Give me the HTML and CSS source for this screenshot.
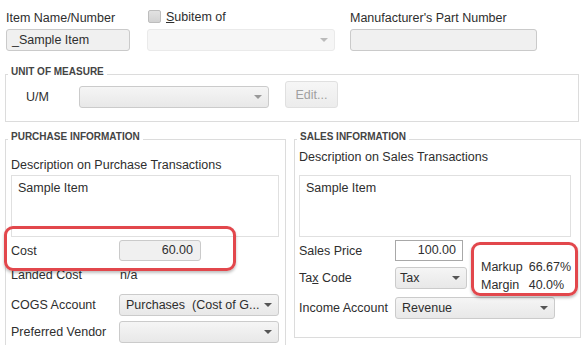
FILE: index.html
```html
<!DOCTYPE html>
<html lang="en">
  <head>
    <meta charset="UTF-8" />
    <meta name="viewport" content="width=device-width, initial-scale=1.0" />
    <title>Edit Item</title>
    <link rel="stylesheet" href="styles.css">
  </head>
  <body>
    <div class="page">
      <div class="top-row">
        <div class="field name-field">
          <label class="label">Item Name/Number</label>
          <div class="textbox">_Sample Item</div>
        </div>
        <div class="field subitem-field">
          <label class="label"><span class="checkbox"></span><u>S</u>ubitem of</label>
          <div class="combo disabled"><span></span><span class="arrow"></span></div>
        </div>
        <div class="field part-field">
          <label class="label">Manufacturer's Part Number</label>
          <div class="textbox"></div>
        </div>
      </div>

      <fieldset class="group uom">
        <legend>UNIT OF MEASURE</legend>
        <div class="uom-row">
          <span class="uom-label">U/M</span>
          <div class="combo uom-combo"><span></span><span class="arrow light"></span></div>
          <button class="edit-btn" type="button">Edit...</button>
        </div>
      </fieldset>

      <div class="columns">
        <fieldset class="group purchase">
          <legend>PURCHASE INFORMATION</legend>
          <div class="group-body">
            <div class="desc-label">Description on Purchase Transactions</div>
            <div class="desc">Sample Item</div>
            <div class="row cost-row">
              <span class="row-label">Cost</span>
              <div class="textbox amount cost">60.00</div>
            </div>
            <div class="row landed-row">
              <span class="row-label">Landed Cost</span>
              <span class="na">n/a</span>
            </div>
            <div class="row cogs-row">
              <span class="row-label">COGS Account</span>
              <div class="combo wide"><span>Purchases &nbsp;(Cost of G...</span><span class="arrow"></span></div>
            </div>
            <div class="row vendor-row">
              <span class="row-label">Preferred Vendor</span>
              <div class="combo wide"><span></span><span class="arrow"></span></div>
            </div>
          </div>
        </fieldset>

        <fieldset class="group sales">
          <legend>SALES INFORMATION</legend>
          <div class="group-body">
            <div class="desc-label">Description on Sales Transactions</div>
            <div class="desc">Sample Item</div>
            <div class="price-area">
              <div class="price-rows">
                <div class="row">
                  <span class="row-label">Sales Price</span>
                  <div class="entry amount">100.00</div>
                </div>
                <div class="row tax-row">
                  <span class="row-label">Ta<u>x</u> Code</span>
                  <div class="combo tax"><span>Tax</span><span class="arrow"></span></div>
                </div>
              </div>
              <div class="markup">
                <span>Markup</span><span>66.67%</span>
                <span>Margin</span><span>40.0%</span>
              </div>
            </div>
            <div class="row income-row">
              <span class="row-label">Income Account</span>
              <div class="combo wide"><span>Revenue</span><span class="arrow"></span></div>
            </div>
          </div>
        </fieldset>
      </div>

      <div class="highlight cost-mark"></div>
      <div class="highlight markup-mark"></div>
    </div>
  </body>
</html>
```

FILE: styles.css
```css
* {
  box-sizing: border-box;
}

body {
  margin: 0;
  background: #fff;
  font-family: "Liberation Sans", Arial, sans-serif;
  font-size: 12.5px;
  color: #2e2e2e;
  overflow: hidden;
}

.page {
  position: relative;
  width: 581px;
  height: 345px;
}

.top-row {
  display: flex;
  padding-top: 10px;
}

.field {
  display: flex;
  flex-direction: column;
}

.label {
  height: 19px;
  padding-top: 1px;
  line-height: 15px;
  display: flex;
  align-items: flex-start;
}

.name-field {
  margin-left: 6px;
  width: 124px;
}

.subitem-field {
  margin-left: 17px;
  width: 188px;
}

.subitem-field .label {
  padding-top: 0;
}

.part-field {
  margin-left: 15px;
  width: 187px;
}

.checkbox {
  width: 13px;
  height: 13px;
  margin: 0 5px 0 1px;
  border: 1px solid #bdbdbd;
  border-radius: 2px;
  background: linear-gradient(#e2e2e2, #d2d2d2);
}

.textbox {
  height: 22px;
  line-height: 20px;
  padding: 0 5px;
  border: 1px solid #cacaca;
  border-radius: 3px;
  background: #f0f0f0;
}

.combo {
  display: flex;
  align-items: center;
  justify-content: space-between;
  height: 22px;
  padding: 0 6px;
  border: 1px solid #cbcbcb;
  border-radius: 3px;
  background: linear-gradient(#f5f5f5, #e8e8e8);
  white-space: nowrap;
}

.combo.disabled {
  border-color: #eaeaea;
  background: #f6f6f6;
}

.arrow {
  width: 0;
  height: 0;
  border-left: 4px solid transparent;
  border-right: 4px solid transparent;
  border-top: 4px solid #555;
}

.arrow.light {
  border-top-color: #999;
}

.combo.disabled .arrow {
  border-top-color: #bbb;
}

.group {
  margin: 0;
  padding: 0;
  border: 1px solid #dcdcdc;
}

.group legend {
  margin-left: 2px;
  padding: 0 3px 4px;
  font-size: 10px;
  line-height: 12px;
  font-weight: bold;
  color: #444;
}

.uom {
  margin: 15px 0 0 5px;
  width: 574px;
  padding-bottom: 13px;
}

.uom-row {
  display: flex;
  align-items: flex-end;
  margin: -1px 0 0 20px;
}

.uom-label {
  width: 53px;
  line-height: 22px;
}

.uom-combo {
  width: 190px;
}

.edit-btn {
  margin-left: 16px;
  width: 53px;
  height: 27px;
  border: 1px solid #e0e0e0;
  border-radius: 3px;
  background: linear-gradient(#f6f6f6, #ececec);
  font-family: inherit;
  font-size: 12.5px;
  color: #a0a0a0;
}

.columns {
  display: flex;
  align-items: flex-start;
  margin: 9px 0 0 5px;
  gap: 8px;
}

.purchase {
  width: 281px;
  height: 230px;
}

.purchase .group-body {
  padding: 11px 6px 0 5px;
}

.sales {
  width: 284px;
}

.sales .group-body {
  padding: 3px 9px 19px 4px;
}

.desc-label {
  line-height: 15px;
}

.desc {
  height: 62px;
  margin-top: 2px;
  padding: 5px 6px;
  border: 1px solid #e0e0e0;
  background: #fff;
  line-height: 15px;
}

.sales .desc {
  margin-top: 10px;
}

.row {
  display: flex;
  align-items: center;
  height: 21px;
}

.row-label {
  width: 108px;
  flex: none;
}

.sales .row-label {
  width: 96px;
}

.cost-row {
  margin-top: 3px;
}

.landed-row {
  margin-top: 3px;
}

.na {
  padding-left: 1px;
}

.cogs-row {
  margin-top: 9px;
}

.vendor-row {
  margin-top: 6px;
  height: 22px;
}

.amount {
  text-align: right;
}

.cost {
  width: 82px;
  height: 21px;
  line-height: 19px;
  padding-right: 7px;
}

.wide {
  width: 160px;
}

.price-area {
  display: flex;
  height: 48px;
  margin-top: 3px;
}

.entry {
  width: 68px;
  height: 21px;
  line-height: 19px;
  padding: 0 6px;
  border: 1px solid #a8a8a8;
  background: #fff;
}

.tax-row {
  margin-top: 6px;
}

.tax {
  width: 72px;
  padding-left: 4px;
}

.markup {
  display: grid;
  grid-template-columns: auto auto;
  column-gap: 6px;
  align-content: start;
  margin-left: 14px;
  padding-top: 18px;
  line-height: 18px;
}

.income-row {
  margin-top: 9px;
}

.highlight {
  position: absolute;
  border: 3px solid #e2474c;
  border-radius: 9px;
  box-shadow: 0 2px 3px rgba(0, 0, 0, 0.25);
}

.cost-mark {
  left: 4px;
  top: 226px;
  width: 232px;
  height: 45px;
}

.markup-mark {
  left: 471px;
  top: 242px;
  width: 107px;
  height: 54px;
}
```
